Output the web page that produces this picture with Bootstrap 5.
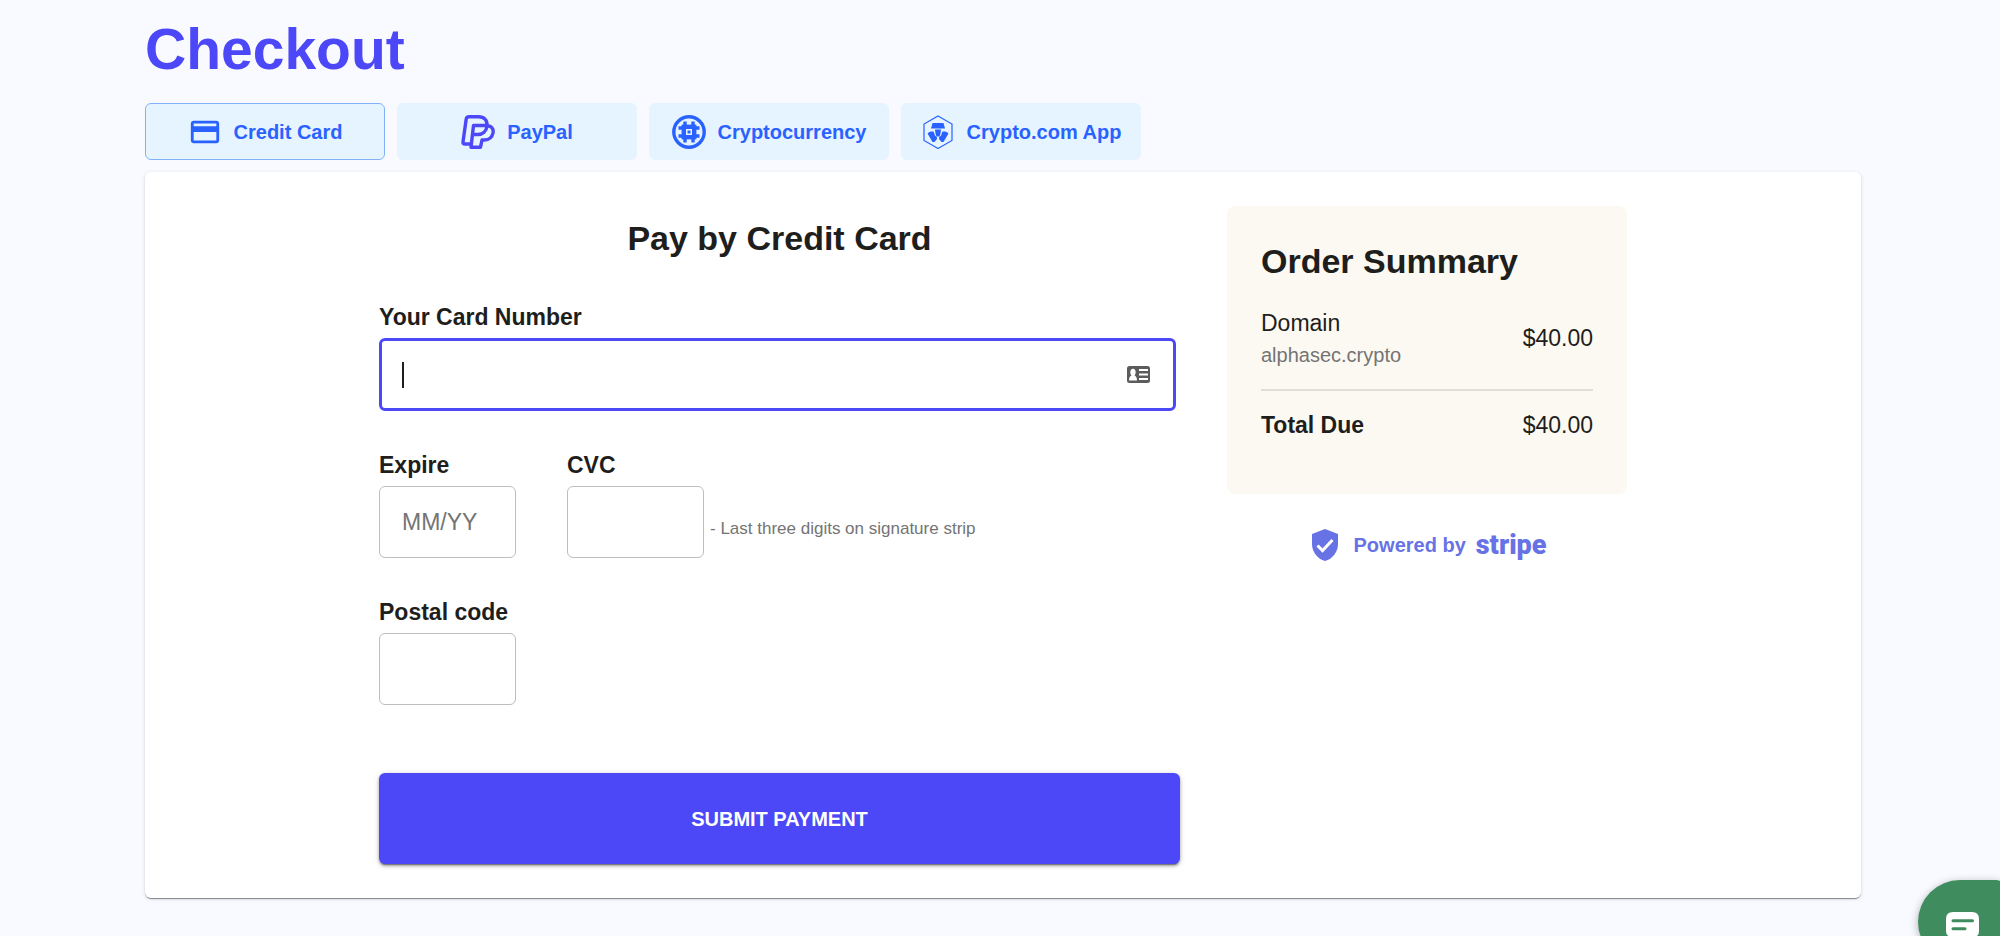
<!DOCTYPE html>
<html lang="en">
<head>
<meta charset="utf-8">
<meta name="viewport" content="width=device-width, initial-scale=1">
<title>Checkout</title>
<link href="https://cdn.jsdelivr.net/npm/bootstrap@5.3.0/dist/css/bootstrap.min.css" rel="stylesheet">
<style>
  :root { --brand: #4c47f7; --azure: #2962ff; --ink: #1e1e1c; --muted: #747474; }
  body { background: #f9faff; color: var(--ink); font-family: "Liberation Sans", Arial, sans-serif; font-size: 23px; line-height: 28px; }
  .page { padding: 17px 139px 22px 145px; }
  .page-title { color: var(--brand); font-size: 57px; line-height: 64px; margin-bottom: 22px; }
  .pay-tabs { gap: 12px; margin-bottom: 12px; }
  .pay-tab { width: 240px; height: 57px; gap: 12px; padding: 0; border: 1px solid #e6f4ff; border-radius: 6px; background: #e6f4ff; color: var(--azure); font-size: 20px; line-height: 24px; font-weight: 700; }
  .pay-tab.active, .pay-tab:hover { background: #e6f4ff; color: var(--azure); border-color: #e6f4ff; }
  .pay-tab.active { border-color: #82b1fc; }
  .panel { background: #fff; border-radius: 6px; padding: 34px 0; box-shadow: 0 2px 1px -1px rgba(0,0,0,.3), 0 1px 1px rgba(0,0,0,.18), 0 1px 4px rgba(0,0,0,.12); }
  .panel-inner { max-width: 1248px; gap: 47px; }
  .section-title { font-size: 34px; line-height: 40px; }
  .form-title { margin: 12px 0 45px; }
  .pay-label { display: block; font-weight: 700; margin-bottom: 7px; }
  .pay-input { height: 73px; padding: 0 22px; border: 1px solid #bebebe; border-radius: 6px; font-size: 23px; line-height: 28px; color: var(--ink); background: #fff; }
  .pay-input::placeholder { color: var(--muted); }
  .pay-input.short { width: 137px; height: 72px; }
  .card-field { margin-right: 4px; }
  .card-field .pay-input { border: 3px solid var(--brand); box-shadow: none; }
  .caret { position: absolute; left: 23px; top: 24px; width: 2px; height: 26px; background: #1e1e1c; }
  .autofill { position: absolute; right: 26px; top: 28px; }
  .field-row { margin: 40px 0; gap: 51px; }
  .hint { font-size: 17px; line-height: 20px; color: var(--muted); margin: 0 0 19px 6px; }
  .submit { margin-top: 68px; height: 91px; border: 0; border-radius: 6px; background: var(--brand); color: #fff; font-size: 20px; line-height: 24px; font-weight: 700; box-shadow: 0 3px 1px -2px rgba(0,0,0,.3), 0 2px 3px rgba(0,0,0,.3), 0 1px 6px rgba(0,0,0,.16); }
  .submit:hover { background: var(--brand); color: #fff; }
  .summary-col { flex: 0 0 400px; }
  .summary { background: #fcf9f2; border-radius: 8px; padding: 35px 34px 55px; }
  .summary .section-title { margin-bottom: 28px; }
  .domain-name { font-size: 20px; line-height: 24px; margin-top: 6px; color: var(--muted); }
  .rule { border: 0; border-top: 2px solid #dfdfd8; opacity: 1; margin: 22px 0 20px; }
  .powered { margin-top: 35px; padding-left: 4px; color: #6772e5; font-size: 20px; line-height: 24px; font-weight: 700; }
  .stripe-logo { font-family: Roboto, sans-serif; font-size: 27px; line-height: 32px; font-weight: 900; color: #6772e5; margin-left: 10px; }
  .chat { position: fixed; right: -4px; bottom: -28px; width: 86px; height: 84px; padding: 0; border: 0; border-radius: 42px 8px 42px 42px; background: #3f8c5f; box-shadow: 0 2px 8px rgba(0,0,0,.3); }
</style>
</head>
<body>
<main class="page">
  <h1 class="page-title fw-bold">Checkout</h1>
  <div class="pay-tabs d-flex flex-wrap">
    <button type="button" class="pay-tab active btn d-flex align-items-center justify-content-center">
      <svg width="34" height="34" viewBox="0 0 24 24" fill="currentColor" aria-hidden="true"><path d="M20 4H4c-1.100 0-2 .9-2 2v12c0 1.100.9 2 2 2h16c1.100 0 2-.9 2-2V6c0-1.100-.9-2-2-2zm0 14H4v-6h16v6zm0-10H4V6h16v2z"/></svg>
      Credit Card
    </button>
    <button type="button" class="pay-tab btn d-flex align-items-center justify-content-center">
      <svg width="34" height="34" viewBox="0 0 34 34" fill="none" stroke="#4c47f7" stroke-width="3.400" stroke-linejoin="round" stroke-linecap="round" aria-hidden="true"><path d="M9.500 29H4Q1.700 29 2 27L5.200 4Q5.600 1.800 8 1.800H17.500C23 1.800 26.500 5 26 10.500C25.500 16.500 21.500 19.500 17 19.500H13"/><path d="M12.500 10.500H24.500C30.500 10.500 32.800 13.500 32 18C31 22.500 28 25 23.500 25H21L19.500 32.200H10Z"/></svg>
      PayPal
    </button>
    <button type="button" class="pay-tab btn d-flex align-items-center justify-content-center">
      <svg width="34" height="34" viewBox="0 0 34 34" fill="none" stroke="currentColor" aria-hidden="true"><circle cx="17" cy="17" r="15.200" stroke-width="3.400"/><rect x="11.800" y="11.800" width="10.400" height="10.400" stroke-width="4.400"/><path d="M13 6.500V11M21 6.500V11M13 23V27.500M21 23V27.500M6.500 13H11M6.500 21H11M23 13H27.500M23 21H27.500" stroke-width="3.400"/><rect x="15.500" y="15.500" width="3" height="3" fill="currentColor" stroke="none"/></svg>
      Cryptocurrency
    </button>
    <button type="button" class="pay-tab btn d-flex align-items-center justify-content-center">
      <svg width="34" height="34" viewBox="0 0 34 34" fill="currentColor" aria-hidden="true"><path d="M17 1L31 9V25.500L17 33.500L3 25.500V9Z" fill="none" stroke="currentColor" stroke-width="1.200"/><path d="M11.500 8H22.500L24 13.500H10ZM14 14.500H20L19.500 18.500L18.800 20.500V21.500H15.200V20.500L14.500 18.500ZM9.500 16.500H12.500L14 20.500L16 22.500V24L13.500 27H11.500L6.800 19V18ZM24.500 16.500H21.500L20 20.500L18 22.500V24L20.500 27H22.500L27.200 19V18Z"/></svg>
      Crypto.com App
    </button>
  </div>

  <section class="panel">
    <div class="panel-inner d-flex mx-auto">
      <form class="flex-grow-1">
        <h2 class="section-title form-title fw-bold text-center">Pay by Credit Card</h2>
        <div class="card-field">
          <label class="pay-label" for="card">Your Card Number</label>
          <div class="position-relative">
            <input class="pay-input form-control" id="card" type="text" inputmode="numeric">
            <span class="caret"></span>
            <svg class="autofill" width="23" height="17" viewBox="0 0 23 17" aria-hidden="true"><rect width="23" height="17" rx="2.500" fill="#5c5c5c"/><path d="M2 14.500C2 11.500 3.200 10.200 4.500 9.600C2.600 8 2.800 2.800 6 2.800S9.400 8 7.500 9.600C8.800 10.200 10 11.500 10 14.500ZM12 3H21V5H12ZM12 7.500H21V9.500H12ZM12 12H21V14H12Z" fill="#fff"/></svg>
          </div>
        </div>
        <div class="field-row d-flex">
          <div>
            <label class="pay-label" for="expire">Expire</label>
            <input class="pay-input short form-control" id="expire" type="text" placeholder="MM/YY">
          </div>
          <div>
            <label class="pay-label" for="cvc">CVC</label>
            <div class="d-flex align-items-end">
              <input class="pay-input short form-control" id="cvc" type="text" aria-describedby="cvc-hint">
              <span class="hint" id="cvc-hint">- Last three digits on signature strip</span>
            </div>
          </div>
        </div>
        <div>
          <label class="pay-label" for="postal">Postal code</label>
          <input class="pay-input short form-control" id="postal" type="text">
        </div>
        <button type="submit" class="submit btn w-100">SUBMIT PAYMENT</button>
      </form>

      <aside class="summary-col">
        <div class="summary">
          <h2 class="section-title fw-bold">Order Summary</h2>
          <div class="d-flex justify-content-between align-items-center">
            <div>
              <div>Domain</div>
              <div class="domain-name">alphasec.crypto</div>
            </div>
            <div>$40.00</div>
          </div>
          <hr class="rule">
          <div class="d-flex justify-content-between">
            <strong>Total Due</strong>
            <span>$40.00</span>
          </div>
        </div>
        <div class="powered d-flex justify-content-center align-items-center">
          <svg class="me-3" width="26" height="32" viewBox="0 0 26 32" aria-hidden="true"><path d="M13 0L26 5V15C26 23 20.500 30 13 32C5.500 30 0 23 0 15V5Z" fill="#6772e5"/><path d="M5.500 16.500L10.500 21.500L20.500 11" fill="none" stroke="#fff" stroke-width="3"/></svg>
          <span>Powered by</span>
          <span class="stripe-logo">stripe</span>
        </div>
      </aside>
    </div>
  </section>
</main>

<button type="button" class="chat" aria-label="Open chat">
  <svg class="d-block mx-auto" width="36" height="36" viewBox="0 0 36 36" aria-hidden="true"><path d="M10 8H29Q36 8 36 15V27Q36 33 30 33H22L16 36V33H10Q3 33 3 27V15Q3 8 10 8Z" fill="#fff"/><path d="M10 16.700H29.500M10 24.700H22" stroke="#3f8c5f" stroke-width="3" stroke-linecap="round"/></svg>
</button>
<script src="https://cdn.jsdelivr.net/npm/bootstrap@5.3.0/dist/js/bootstrap.bundle.min.js"></script>
</body>
</html>
